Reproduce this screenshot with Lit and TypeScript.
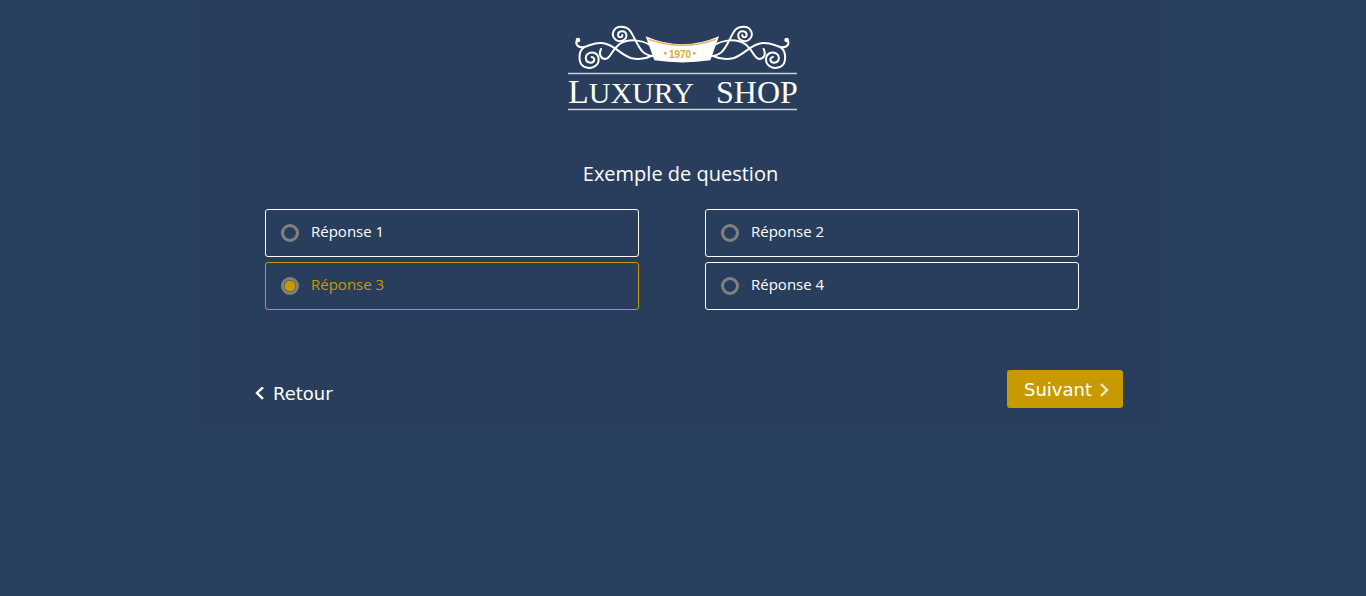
import { LitElement, html, css, svg } from "lit";
import { customElement, state } from "lit/decorators.js";

const flourish = svg`
  <path d="M53 74 C44 84 50 98 70 97 C92 91 102 82 126 84 C164 88 176 116 212 129 C234 135 256 132 274 123" />
  <path d="M72 97 C54 109 54 145 72 155 C92 165 116 153 116 134 C116 114 98 109 86 115 C73 122 75 142 91 143 C105 143 107 127 95 126" />
  <path d="M123 102 C115 118 123 132 136 132 C153 131 153 107 176 89 C204 70 242 73 272 91" />
  <path d="M280 123 C246 121 239 98 226 76 C213 50 208 35 183 35 C159 35 151 62 167 74 C181 85 202 74 199 58 C195 44 174 47 174 59 C174 69 188 69 187 60" />
`;

@customElement("shop-logo")
export class ShopLogo extends LitElement {
  static styles = css`
    :host {
      display: block;
    }
    .logo {
      display: block;
      width: 231px;
      height: 86px;
      overflow: visible;
    }
    .swirl {
      fill: none;
      stroke: #fff;
      stroke-width: 6;
      stroke-linecap: round;
    }
    .name {
      fill: #fff;
      font-family: "Liberation Serif", serif;
      font-size: 30px;
    }
    .initial {
      font-size: 34px;
    }
    .second {
      font-size: 32px;
    }
    .year {
      fill: #dca834;
      font-family: "Liberation Sans", sans-serif;
      font-size: 10px;
      font-weight: 700;
      text-anchor: middle;
    }
  `;

  render() {
    return html`
      <svg class="logo" viewBox="0 0 231 86" role="img" aria-label="Luxury Shop 1970">
        <g transform="translate(-8 -10) scale(0.33333)">
          <g class="swirl">${flourish}</g>
          <circle cx="54" cy="75" r="7" fill="#fff" />
          <g transform="translate(734 0) scale(-1 1)">
            <g class="swirl">${flourish}</g>
            <circle cx="54" cy="75" r="7" fill="#fff" />
          </g>
          <path d="M257 64 Q367 112 477 64 L451 136 Q367 149 283 136 Z" fill="#fff" />
          <path d="M266 73 Q367 109 468 73" fill="none" stroke="#dfb24a" stroke-width="4" />
          <circle cx="316" cy="115" r="4" fill="#dca834" />
          <circle cx="403" cy="115" r="4" fill="#dca834" />
        </g>
        <text class="year" x="112" y="33">1970</text>
        <path d="M0 48.5H229M0 84.5H229" stroke="#c9d0d9" stroke-width="1.6" />
        <text class="name" x="0" y="78"><tspan class="initial">L</tspan>UXURY</text>
        <text class="name second" x="148" y="78">SHOP</text>
      </svg>
    `;
  }
}

@customElement("app-root")
export class AppRoot extends LitElement {
  @state() private selected = 3;

  static styles = css`
    :host {
      display: block;
      min-height: 100vh;
      background: #293f5e;
      color: #fff;
      font-family: "Open Sans", sans-serif;
    }
    * {
      box-sizing: border-box;
    }
    .panel {
      max-width: 960px;
      margin: 0 auto;
      padding: 25px 40px 12px 52px;
      background: #293e5c;
    }
    .header {
      display: flex;
      justify-content: center;
      padding-right: 12px;
    }
    .survey {
      margin: 0;
      padding: 48px 0 0;
    }
    .question {
      margin: 0;
      padding: 0 17px 20px 0;
      font-size: 20px;
      font-weight: 400;
      line-height: 30px;
      text-align: center;
    }
    .answers {
      display: grid;
      grid-template-columns: 1fr 1fr;
      gap: 5px 66px;
      margin: 0 44px 0 10px;
    }
    .answer {
      display: flex;
      align-items: center;
      gap: 12px;
      height: 48px;
      padding: 0 15px;
      border: 1px solid #fff;
      border-radius: 3px;
      font-size: 15px;
      line-height: 20px;
      cursor: pointer;
    }
    .answer.checked {
      border-color: #c69a00;
      color: #c69a00;
    }
    .text {
      padding-bottom: 4px;
    }
    .radio {
      appearance: none;
      flex: none;
      width: 18px;
      height: 18px;
      margin: 0;
      border: 3px solid #808080;
      border-radius: 50%;
    }
    .radio:checked {
      background: radial-gradient(circle, #c69a00 5px, transparent 6px);
    }
    .nav {
      display: flex;
      justify-content: space-between;
      align-items: flex-start;
      padding-top: 60px;
    }
    .button {
      display: flex;
      align-items: center;
      gap: 8px;
      height: 38px;
      padding: 2px 0 0;
      border: 0;
      border-radius: 3px;
      background: none;
      color: #fff;
      font-family: "DejaVu Sans", sans-serif;
      font-size: 18px;
      line-height: 22px;
      cursor: pointer;
    }
    .back {
      gap: 9px;
      margin-top: 4px;
    }
    .next {
      padding: 2px 14px 0 17px;
      background: #c69a00;
    }
    .chevron {
      width: 9px;
      height: 14px;
      fill: none;
      stroke: currentColor;
      stroke-width: 2.4;
    }
    .next .chevron {
      stroke: #f3ead0;
    }
  `;

  render() {
    return html`
      <main class="panel">
        <header class="header"><shop-logo></shop-logo></header>
        <form class="survey" @submit=${(e: Event) => e.preventDefault()}>
          <h1 class="question" id="question">Exemple de question</h1>
          <div class="answers" role="radiogroup" aria-labelledby="question">
            ${[1, 2, 3, 4].map(
              (n) => html`
                <label class="answer ${n === this.selected ? "checked" : ""}" for="answer-${n}">
                  <input
                    class="radio"
                    type="radio"
                    name="answer"
                    id="answer-${n}"
                    .checked=${n === this.selected}
                    @change=${() => (this.selected = n)}
                  />
                  <span class="text">Réponse ${n}</span>
                </label>
              `
            )}
          </div>
          <div class="nav">
            <button class="button back" type="button">
              <svg class="chevron" viewBox="0 0 9 14" aria-hidden="true"><path d="M8 0.300 2 6l6 5.800" /></svg>
              Retour
            </button>
            <button class="button next" type="submit">
              Suivant
              <svg class="chevron" viewBox="0 0 9 14" aria-hidden="true"><path d="M1 1l6 6-6 6" /></svg>
            </button>
          </div>
        </form>
      </main>
    `;
  }
}
